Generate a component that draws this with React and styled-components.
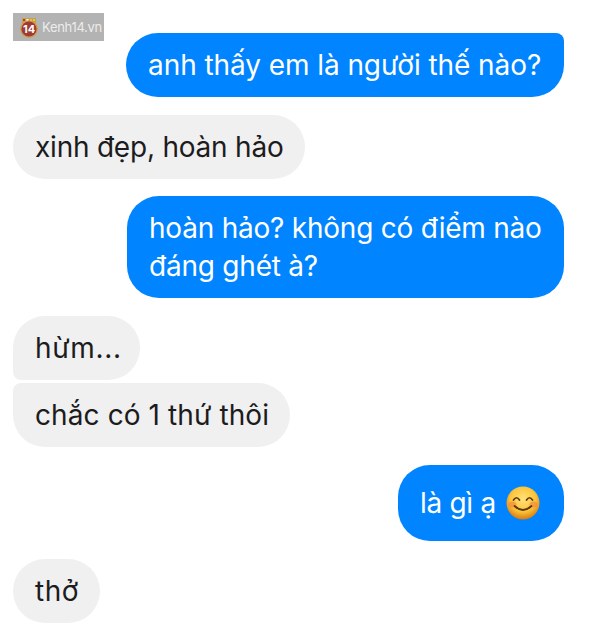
import React from 'react';
import styled, { createGlobalStyle } from 'styled-components';

const GlobalStyle = createGlobalStyle`
  html, body {
    margin: 0;
    padding: 0;
    background: #fff;
  }
`;

const Page = styled.div`
  position: relative;
  width: 600px;
  height: 644px;
  box-sizing: border-box;
  padding: 33px 36px 0 13px;
  overflow: hidden;
  font-family: Inter, "Liberation Sans", sans-serif;
  display: flex;
  flex-direction: column;
`;

const Row = styled.div`
  display: flex;
  justify-content: ${(p) => (p.$mine ? 'flex-end' : 'flex-start')};
  margin-bottom: ${(p) => p.$gap}px;
`;

const Bubble = styled.div`
  box-sizing: border-box;
  width: ${(p) => p.$width}px;
  height: ${(p) => p.$height}px;
  padding: 0 22px;
  display: flex;
  flex-direction: column;
  justify-content: center;
  border-radius: ${(p) => p.$radius};
  background: ${(p) => (p.$mine ? '#0084ff' : '#f1f0f0')};
  color: ${(p) => (p.$mine ? '#fff' : '#1c1c1e')};
  font-size: 28px;
  line-height: 38px;
  font-weight: 400;
  letter-spacing: ${(p) => p.$track}px;
  white-space: nowrap;
`;

const Line = styled.span`
  display: flex;
  align-items: center;
  gap: 10px;
`;

const Watermark = styled.div`
  position: absolute;
  left: 13px;
  top: 13px;
  width: 91px;
  height: 28px;
  background: #b3b3b3;
  display: flex;
  align-items: center;
  gap: 4px;
  padding-left: 7px;
  box-sizing: border-box;
`;

const WatermarkText = styled.span`
  color: #ececec;
  font-size: 13px;
  font-weight: 400;
  letter-spacing: -0.3px;
`;

const Badge = () => (
  <svg width="18" height="21" viewBox="0 0 18 21">
    <path d="M2 1h14v6H2z" fill="#c9a04a" />
    <rect x="3" y="2" width="2" height="2" fill="#b23a32" />
    <rect x="6.5" y="2" width="2" height="2" fill="#fff" />
    <rect x="10" y="2" width="2" height="2" fill="#e4c35c" />
    <rect x="13" y="2" width="2" height="2" fill="#e4c35c" />
    <circle cx="9" cy="12" r="8.2" fill="#9f3a34" stroke="#cf9c4a" strokeWidth="1.2" />
    <text x="9" y="16" textAnchor="middle" fontSize="11" fontWeight="700" fill="#fff" fontFamily="Inter, sans-serif">14</text>
  </svg>
);

const Smile = () => (
  <svg width="34" height="34" viewBox="0 0 34 34">
    <defs>
      <radialGradient id="face" cx="50%" cy="38%" r="62%">
        <stop offset="0%" stopColor="#ffe27a" />
        <stop offset="62%" stopColor="#fcc437" />
        <stop offset="100%" stopColor="#d97a10" />
      </radialGradient>
    </defs>
    <circle cx="17" cy="17" r="16.5" fill="url(#face)" />
    <ellipse cx="6.5" cy="18.5" rx="4" ry="3" fill="#f57f45" opacity="0.6" />
    <ellipse cx="27.5" cy="18.5" rx="4" ry="3" fill="#f57f45" opacity="0.6" />
    <path d="M7.5 14q3-4.5 6 0M20.5 14q3-4.5 6 0" fill="none" stroke="#5b3a12" strokeWidth="1.7" strokeLinecap="round" />
    <path d="M8.5 20q8.5 8 17 0" fill="none" stroke="#5b3a12" strokeWidth="1.8" strokeLinecap="round" />
  </svg>
);

const messages = [
  { mine: true, width: 438, height: 64, gap: 18, track: -0.07, radius: '32px 8px 32px 32px', lines: ['anh thấy em là người thế nào?'] },
  { width: 292, height: 64, gap: 17, track: -0.22, radius: '32px', lines: ['xinh đẹp, hoàn hảo'] },
  { mine: true, width: 437, height: 102, gap: 18, track: -0.22, radius: '32px', lines: ['hoàn hảo? không có điểm nào', 'đáng ghét à?'] },
  { width: 127, height: 64, gap: 3, track: 0.7, radius: '32px 32px 32px 8px', lines: ['hừm...'] },
  { width: 277, height: 64, gap: 18, track: 0.1, radius: '8px 32px 32px 32px', lines: ['chắc có 1 thứ thôi'] },
  { mine: true, width: 166, height: 76, gap: 18, track: -0.3, radius: '32px', smile: true, lines: ['là gì ạ'] },
  { width: 87, height: 64, gap: 0, track: 0.5, radius: '32px', lines: ['thở'] },
];

const App = () => (
  <Page>
    <GlobalStyle />
    <Watermark>
      <Badge />
      <WatermarkText>Kenh14.vn</WatermarkText>
    </Watermark>
    {messages.map((m, i) => (
      <Row key={i} $mine={m.mine} $gap={m.gap}>
        <Bubble $mine={m.mine} $width={m.width} $height={m.height} $radius={m.radius} $track={m.track}>
          {m.lines.map((line, j) => (
            <Line key={j}>
              {line}
              {m.smile && <Smile />}
            </Line>
          ))}
        </Bubble>
      </Row>
    ))}
  </Page>
);

export default App;
